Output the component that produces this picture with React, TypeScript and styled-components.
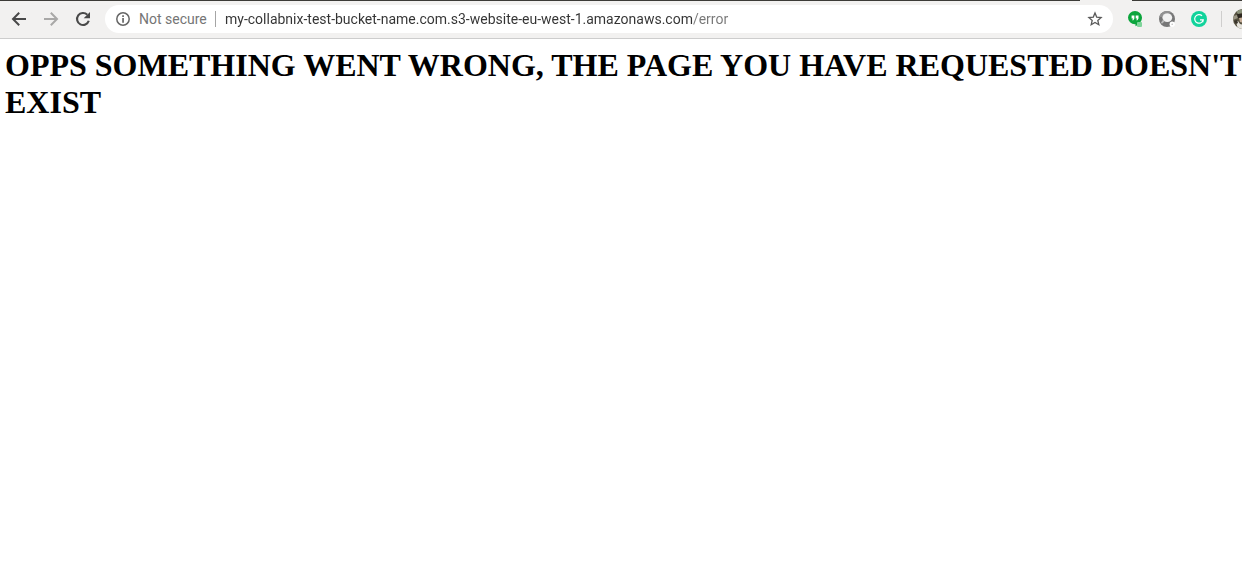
import React from "react";
import styled, { createGlobalStyle } from "styled-components";

const GlobalStyle = createGlobalStyle`
  * { box-sizing: border-box; }
  body { margin: 0; background: #ffffff; overflow-x: hidden; }
`;

const TabStrip = styled.div`
  display: flex;
  height: 1px;
  background: #f2f1f0;
`;

const StripPart = styled.div<{ $width?: number; $light?: boolean }>`
  flex: ${(p) => (p.$width ? `0 0 ${p.$width}px` : "1")};
  background: ${(p) => (p.$light ? "#f2f1f0" : "#3c3b37")};
`;

const Toolbar = styled.header`
  display: flex;
  align-items: center;
  height: 38px;
  padding: 0 0 1px 9px;
  background: #f2f1f0;
  border-bottom: 1px solid #cdcdcd;
`;

const Group = styled.div`
  display: flex;
  align-items: center;
  gap: 12px;
`;

const IconButton = styled.button<{ $size?: number; $color?: string }>`
  display: flex;
  align-items: center;
  justify-content: center;
  flex: none;
  width: ${(p) => p.$size ?? 20}px;
  height: ${(p) => p.$size ?? 20}px;
  padding: 0;
  border: 0;
  background: none;
  color: ${(p) => p.$color ?? "#494949"};

  svg {
    flex: none;
  }
`;

const AddressBar = styled.div`
  display: flex;
  align-items: center;
  flex: 1;
  min-width: 0;
  height: 28px;
  margin: 0 14px 0 12px;
  padding: 0 10px;
  border-radius: 14px;
  background: #ffffff;
  font: 14px/20px Roboto, sans-serif;
`;

const Security = styled.label`
  flex: none;
  width: 76px;
  margin-left: 8px;
  color: #757575;
`;

const Separator = styled.span<{ $soft?: boolean }>`
  flex: none;
  width: 1px;
  height: 16px;
  background: ${(p) => (p.$soft ? "#cfcecd" : "#a5a5a5")};
`;

const AddressInput = styled.input`
  flex: 1;
  min-width: 0;
  height: 20px;
  margin-left: 9px;
  padding: 0;
  border: 0;
  outline: 0;
  font: inherit;
  color: #333333;
  background: linear-gradient(to right, #333333 467px, #777777 467px);
  -webkit-background-clip: text;
  background-clip: text;
  -webkit-text-fill-color: transparent;
`;

const Extensions = styled(Group)`
  gap: 16px;
`;

const ProfileArea = styled.div`
  display: flex;
  flex: none;
  align-items: center;
  width: 21px;
  margin-left: 14px;
  overflow: hidden;
  gap: 11px;
`;

const Page = styled.main`
  padding: 8px 0 0 5px;
`;

const Heading = styled.h1`
  margin: 0;
  font: bold 32px/37px "Liberation Serif", serif;
  color: #000000;
`;

const BackIcon = () => (
  <svg width="20" height="20" viewBox="0 0 20 20" fill="none" stroke="currentColor" strokeWidth="2" aria-hidden="true">
    <path d="M17 10H4.500M10.200 3.700L4 10l6.200 6.300" />
  </svg>
);

const ForwardIcon = () => (
  <svg width="20" height="20" viewBox="0 0 20 20" fill="none" stroke="currentColor" strokeWidth="2" aria-hidden="true">
    <path d="M3 10h12.500M9.800 3.700L16 10l-6.200 6.300" />
  </svg>
);

const ReloadIcon = () => (
  <svg width="20" height="20" viewBox="0 0 20 20" aria-hidden="true">
    <path d="M14.300 5.700A6 6 0 1 0 15.800 11.800" fill="none" stroke="currentColor" strokeWidth="2.100" />
    <path d="M17 3v6.300h-6.300z" fill="currentColor" />
  </svg>
);

const InfoIcon = () => (
  <svg width="16" height="16" viewBox="0 0 16 16" aria-hidden="true">
    <circle cx="8" cy="8" r="6.200" fill="none" stroke="currentColor" strokeWidth="1.500" />
    <path d="M7.200 4.300h1.700v1.600H7.200zM7.200 7h1.700v4.700H7.200z" fill="currentColor" />
  </svg>
);

const StarIcon = () => (
  <svg width="16" height="16" viewBox="0 0 16 16" aria-hidden="true">
    <path
      d="M8 2l1.700 4.100 4.400.4-3.300 2.900 1 4.300L8 11.400l-3.800 2.300 1-4.300-3.300-2.900 4.400-.4z"
      fill="none"
      stroke="currentColor"
      strokeWidth="1.300"
    />
  </svg>
);

const HangoutsIcon = () => (
  <svg width="16" height="16" viewBox="0 0 16 16" aria-hidden="true">
    <path d="M8 0a7 6.600 0 0 1 7 6.600c0 3.600-2.800 6.900-6.500 8.700v-2.100H8A7 6.600 0 0 1 8 0z" fill="#0ba53c" />
    <path d="M4.600 4.500h2.800v3L6.300 9.200H5.200L6 7.400H4.600zM8.700 4.500h2.800v3l-1.100 1.700H9.300l.8-1.800H8.700z" fill="#fff" />
    <rect x="10" y="11" width="5" height="5" rx="1" fill="#7fd49a" />
  </svg>
);

const GlobeIcon = () => (
  <svg width="16" height="16" viewBox="0 0 16 16" aria-hidden="true">
    <circle cx="8" cy="8" r="8" fill="#777777" />
    <path d="M.3 6A8 8 0 0 1 13 1.800L7 2 3 6z" fill="#929292" />
    <ellipse cx="8.300" cy="6.600" rx="4.900" ry="4.300" fill="#f2f2f2" />
    <path d="M4.300 8.500L2 11.500l1 1.200 2.600-2.400z" fill="#bdbdbd" />
    <circle cx="13.200" cy="13.200" r="2.600" fill="#ffffff" />
    <circle cx="13.200" cy="13.200" r=".8" fill="#bdbdbd" />
  </svg>
);

const GrammarIcon = () => (
  <svg width="16" height="16" viewBox="0 0 16 16" aria-hidden="true">
    <circle cx="8" cy="8" r="8" fill="#11d39b" />
    <path d="M11 4.800A4.300 4.300 0 1 0 12.200 8.800H9" fill="none" stroke="#fff" strokeWidth="1.200" />
    <path d="M11.900 8.800v2.500" fill="none" stroke="#fff" strokeWidth="1" />
  </svg>
);

const Avatar = () => (
  <svg width="20" height="20" viewBox="0 0 20 20" aria-hidden="true">
    <defs>
      <clipPath id="avatar-clip"><circle cx="10" cy="10" r="10" /></clipPath>
    </defs>
    <g clipPath="url(#avatar-clip)">
      <rect width="20" height="20" fill="#55503f" />
      <path d="M3 2l6-2 2 3-6 2z" fill="#8b927b" />
      <path d="M0 7l4-1 1 3-5 2z" fill="#9a9584" />
      <path d="M4 5h6v4H5z" fill="#2d2820" />
      <path d="M6 9l5-1v6l-4-1z" fill="#c6ad98" />
      <path d="M3 13l2-1 2 3 5 1v4H5z" fill="#e6e3dc" />
      <path d="M1 12l3-1 1 3-2 1z" fill="#38332a" />
    </g>
  </svg>
);

export default function App() {
  return (
    <>
      <GlobalStyle />
      <TabStrip>
        <StripPart />
        <StripPart $width={52} $light />
        <StripPart $width={110} />
      </TabStrip>
      <Toolbar>
        <Group as="nav" aria-label="History">
          <IconButton aria-label="Back"><BackIcon /></IconButton>
          <IconButton aria-label="Forward" $color="#a9a8a7"><ForwardIcon /></IconButton>
          <IconButton aria-label="Reload"><ReloadIcon /></IconButton>
        </Group>
        <AddressBar>
          <IconButton aria-label="Site information" $size={16} $color="#666666"><InfoIcon /></IconButton>
          <Security htmlFor="address">Not secure</Security>
          <Separator />
          <AddressInput
            id="address"
            type="text"
            spellCheck={false}
            defaultValue="my-collabnix-test-bucket-name.com.s3-website-eu-west-1.amazonaws.com/error"
          />
          <IconButton aria-label="Bookmark this page" $size={16} $color="#5a5a5a"><StarIcon /></IconButton>
        </AddressBar>
        <Extensions>
          <IconButton aria-label="Hangouts" $size={16}><HangoutsIcon /></IconButton>
          <IconButton aria-label="Web extension" $size={16}><GlobeIcon /></IconButton>
          <IconButton aria-label="Grammar checker" $size={16}><GrammarIcon /></IconButton>
        </Extensions>
        <ProfileArea>
          <Separator $soft />
          <IconButton aria-label="Profile"><Avatar /></IconButton>
        </ProfileArea>
      </Toolbar>
      <Page>
        <Heading>OPPS SOMETHING WENT WRONG, THE PAGE YOU HAVE REQUESTED DOESN'T EXIST</Heading>
      </Page>
    </>
  );
}
